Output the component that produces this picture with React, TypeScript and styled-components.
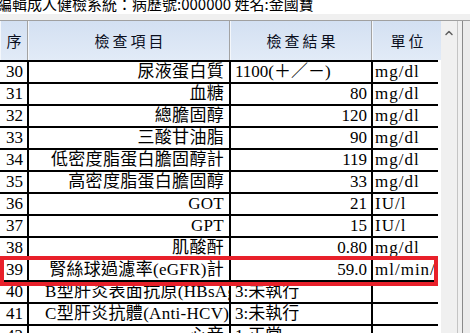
import React from 'react';
import styled, { createGlobalStyle } from 'styled-components';
import { ChevronUp } from 'lucide-react';

const GlobalStyle = createGlobalStyle`
  html, body {
    margin: 0;
    padding: 0;
    background: #f0f0f0;
  }
`;

const Page = styled.div`
  position: relative;
  width: 470px;
  height: 333px;
  overflow: hidden;
  background: #f0f0f0;
  font-family: 'Liberation Serif', 'Noto Sans CJK TC', serif;
`;

const TitleBar = styled.div`
  height: 14px;
  overflow: hidden;
  background: #fff;
`;

const TitleText = styled.div`
  margin: -6px 0 0 -3px;
  font-family: 'Noto Sans CJK TC', sans-serif;
  font-size: 15px;
  line-height: 20px;
  color: #000;
  white-space: nowrap;
`;

const Spacer = styled.div`
  height: 6px;
`;

const Main = styled.div`
  display: flex;
  height: 313px;
  border-top: 1px solid #a0a0a0;
`;

const Grid = styled.div`
  width: 441px;
  background: #fff;
  overflow: hidden;
`;

const HeaderRow = styled.div`
  display: flex;
  height: 39px;
  background: linear-gradient(#d3e0f2, #e2ebf7);
`;

const HeaderCell = styled.div<{ $w: number; $last?: boolean }>`
  box-sizing: border-box;
  width: ${(p) => p.$w}px;
  display: flex;
  align-items: center;
  justify-content: center;
  border-right: ${(p) => (p.$last ? 'none' : '1px solid #a3a3a3')};
  border-left: 1px solid #f4f7fb;
  font-size: 15px;
  letter-spacing: 3px;
  padding-left: 3px;
  color: #0a0f1e;
`;

const Row = styled.div`
  display: flex;
  width: 438px;
  height: 22px;
  box-sizing: border-box;
  border-top: 2px solid #000;
`;

const Cell = styled.div<{ $w: number; $align?: 'left' | 'right' | 'center'; $last?: boolean }>`
  box-sizing: border-box;
  width: ${(p) => p.$w}px;
  overflow: hidden;
  white-space: nowrap;
  border-right: ${(p) => (p.$last ? 'none' : '2px solid #000')};
  text-align: ${(p) => p.$align ?? 'left'};
  font-size: 17px;
  line-height: 20px;
  color: #000;
`;

const IndexCell = styled(Cell)`
  padding-left: 6px;
`;

const ItemCell = styled(Cell)`
  padding: 0 5px 0 16px;
  letter-spacing: 0.3px;
`;

const ValueCell = styled(Cell)`
  padding: 0 4px;
`;

const UnitCell = styled(Cell)`
  padding-left: 2px;
  letter-spacing: 1px;
`;

const Scrollbar = styled.div`
  width: 17px;
  display: flex;
  justify-content: center;
  padding-top: 6px;
  box-sizing: border-box;
  border-right: 1px solid #c4c4c4;
  color: #606060;
`;

const OuterEdge = styled.div`
  flex: 1;
  margin-left: 4px;
  border-left: 1px solid #8a8a8a;
  background: #ececec;
`;

const Highlight = styled.div`
  position: absolute;
  left: 0;
  top: 256px;
  width: 438px;
  height: 30px;
  box-sizing: border-box;
  border: 4px solid #e8202a;
  pointer-events: none;
`;

interface Item {
  no: number;
  name: string;
  value: string;
  unit: string;
  valueAlign?: 'left' | 'right';
}

const items: Item[] = [
  { no: 30, name: '尿液蛋白質', value: '1100(＋／－)', unit: 'mg/dl', valueAlign: 'left' },
  { no: 31, name: '血糖', value: '80', unit: 'mg/dl' },
  { no: 32, name: '總膽固醇', value: '120', unit: 'mg/dl' },
  { no: 33, name: '三酸甘油脂', value: '90', unit: 'mg/dl' },
  { no: 34, name: '低密度脂蛋白膽固醇計', value: '119', unit: 'mg/dl' },
  { no: 35, name: '高密度脂蛋白膽固醇', value: '33', unit: 'mg/dl' },
  { no: 36, name: 'GOT', value: '21', unit: 'IU/l' },
  { no: 37, name: 'GPT', value: '15', unit: 'IU/l' },
  { no: 38, name: '肌酸酐', value: '0.80', unit: 'mg/dl' },
  { no: 39, name: '腎絲球過濾率(eGFR)計', value: '59.0', unit: 'ml/min/1.73m²' },
  { no: 40, name: 'B型肝炎表面抗原(HBsAg)', value: '3:未執行', unit: '', valueAlign: 'left' },
  { no: 41, name: 'C型肝炎抗體(Anti-HCV)', value: '3:未執行', unit: '', valueAlign: 'left' },
  { no: 42, name: '心音', value: '1:正常', unit: '', valueAlign: 'left' },
];

const App: React.FC = () => {
  return (
    <Page>
      <GlobalStyle />
      <TitleBar>
        <TitleText>編輯成人健檢系統：病歷號:000000 姓名:金國寶</TitleText>
      </TitleBar>
      <Spacer />
      <Main>
        <Grid>
          <HeaderRow>
            <HeaderCell $w={28}>序</HeaderCell>
            <HeaderCell $w={202}>檢查項目</HeaderCell>
            <HeaderCell $w={142}>檢查結果</HeaderCell>
            <HeaderCell $w={69} $last>
              單位
            </HeaderCell>
          </HeaderRow>
          {items.map((it) => (
            <Row key={it.no}>
              <IndexCell $w={29}>{it.no}</IndexCell>
              <ItemCell $w={202} $align="right">
                {it.name}
              </ItemCell>
              <ValueCell $w={142} $align={it.valueAlign ?? 'right'}>
                {it.value}
              </ValueCell>
              <UnitCell $w={65} $last>
                {it.unit}
              </UnitCell>
            </Row>
          ))}
        </Grid>
        <Scrollbar>
          <ChevronUp size={12} strokeWidth={3} />
        </Scrollbar>
        <OuterEdge />
      </Main>
      <Highlight />
    </Page>
  );
};

export default App;
